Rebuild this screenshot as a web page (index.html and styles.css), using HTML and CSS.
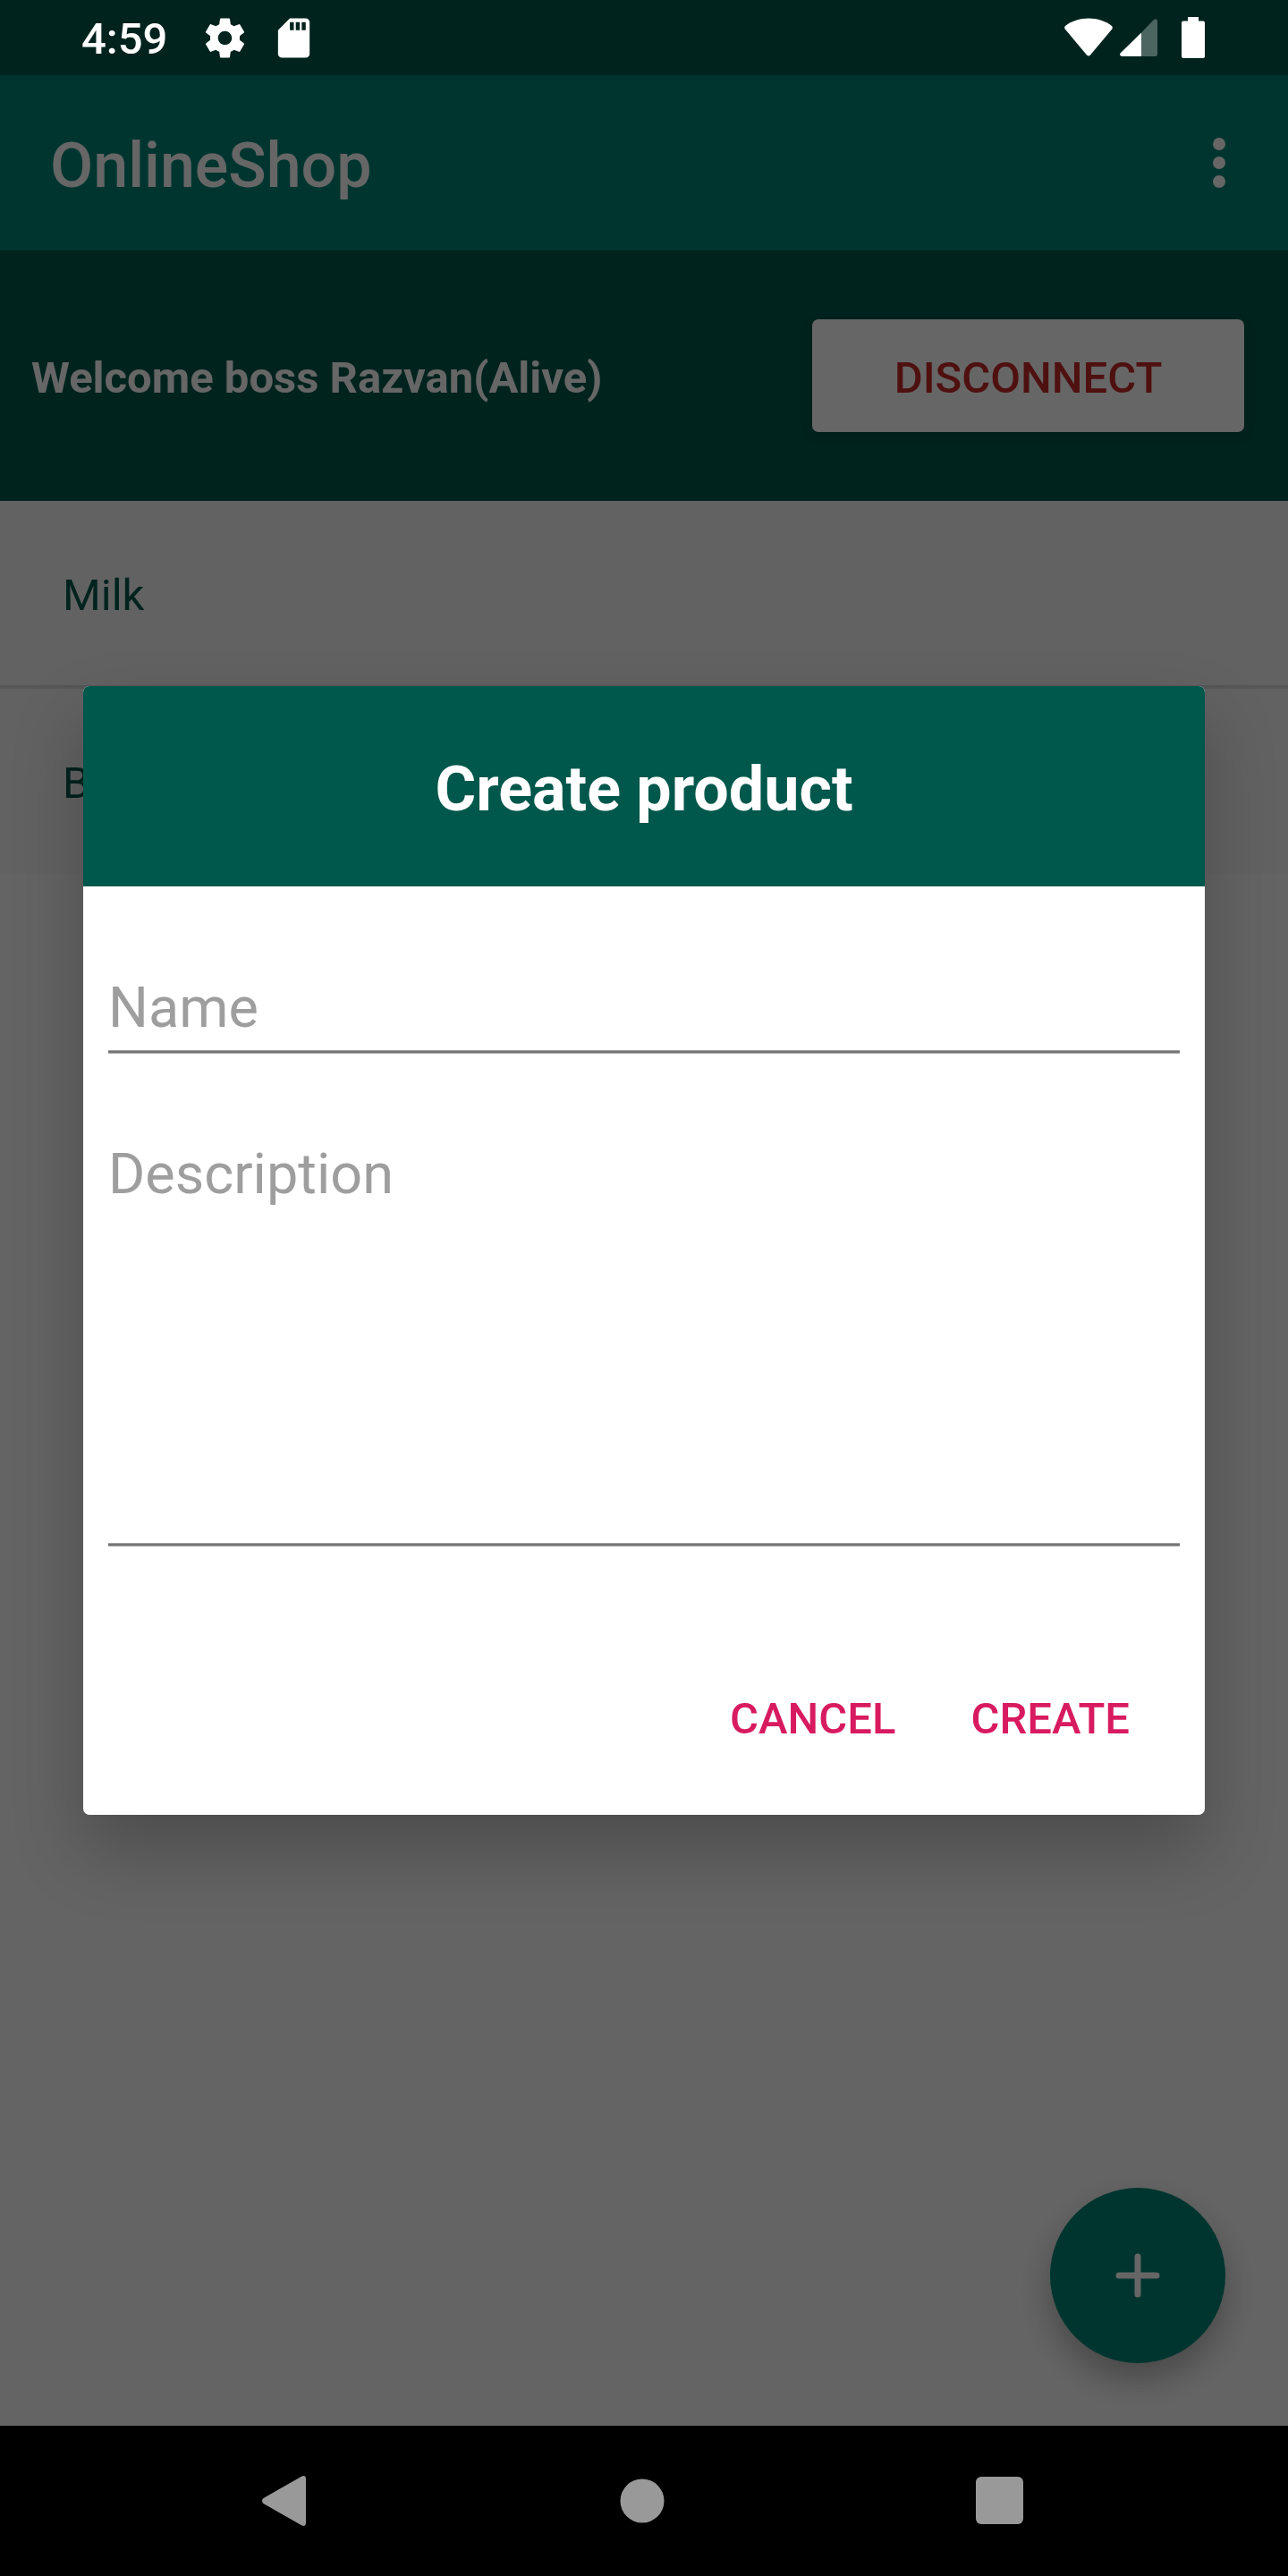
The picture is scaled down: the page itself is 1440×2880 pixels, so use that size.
FILE: index.html
```html
<!DOCTYPE html>
<html lang="en">
<head>
<meta charset="utf-8">
<meta name="viewport" content="width=device-width, initial-scale=1">
<title>OnlineShop</title>
<link rel="stylesheet" href="styles.css">
</head>
<body>
<div class="screen">
  <header class="status-bar">
    <span class="clock">4:59</span>
    <svg class="status-icon" viewBox="0 0 24 24" aria-hidden="true"><path d="M19.43 12.98c.04-.32.07-.64.07-.98s-.03-.66-.07-.98l2.11-1.65c.19-.15.24-.42.12-.64l-2-3.46c-.12-.22-.39-.3-.61-.22l-2.49 1c-.52-.4-1.08-.73-1.69-.98l-.38-2.65C14.46 2.18 14.25 2 14 2h-4c-.25 0-.46.18-.49.42l-.38 2.65c-.61.25-1.17.59-1.69.98l-2.49-1c-.23-.09-.49 0-.61.22l-2 3.46c-.13.22-.07.49.12.64l2.11 1.65c-.04.32-.07.65-.07.98s.03.66.07.98l-2.11 1.65c-.19.15-.24.42-.12.64l2 3.46c.12.22.39.3.61.22l2.49-1c.52.4 1.08.73 1.69.98l.38 2.65c.03.24.24.42.49.42h4c.25 0 .46-.18.49-.42l.38-2.65c.61-.25 1.17-.59 1.69-.98l2.49 1c.23.09.49 0 .61-.22l2-3.46c.12-.22.07-.49-.12-.64l-2.11-1.65zM12 15.5c-1.93 0-3.5-1.57-3.5-3.5s1.57-3.5 3.5-3.5 3.500 1.570 3.500 3.500-1.570 3.500-3.500 3.500z"/></svg>
    <svg class="status-icon" viewBox="0 0 24 24" aria-hidden="true"><path d="M18 2h-8L4.020 8 4 20c0 1.100.9 2 2 2h12c1.100 0 2-.9 2-2V4c0-1.100-.9-2-2-2zm-6 6h-2V4h2v4zm3 0h-2V4h2v4zm3 0h-2V4h2v4z"/></svg>
    <div class="signals">
      <svg class="wifi" viewBox="0 0 54 44" aria-hidden="true"><path d="M1 9C8 3.500 17 .5 27 .5S46 3.500 53 9q1.500 2 .3 3.500L29 41.500q-2 2-4 0L.7 12.500Q-.5 11 1 9z"/></svg>
      <svg class="cell" viewBox="0 0 42 42" aria-hidden="true"><path class="cell-off" d="M24 15.500L38 1q4-2 4 2v36.500q0 2.500-2.500 2.500H24z"/><path d="M24 15.500V42H2.500q-4-1-1.500-4z"/></svg>
      <svg class="battery" viewBox="0 0 26 46" aria-hidden="true"><path d="M7 0h12v4.500h5q2 0 2 2V44q0 2-2 2H2q-2 0-2-2V6.500q0-2 2-2h5z"/></svg>
    </div>
  </header>

  <main class="app">
    <div class="app-bar">
      <h1 class="app-title">OnlineShop</h1>
      <button class="menu-button" type="button" aria-label="More options">
        <svg viewBox="0 0 14 56" width="14" height="56"><circle cx="7" cy="7" r="7"/><circle cx="7" cy="28" r="7"/><circle cx="7" cy="49" r="7"/></svg>
      </button>
    </div>
    <div class="welcome">
      <p class="welcome-text">Welcome boss Razvan(Alive)</p>
      <button class="disconnect" type="button">DISCONNECT</button>
    </div>
    <ul class="products">
      <li class="product">Milk</li>
      <li class="product">Bread</li>
    </ul>
    <button class="fab" type="button" aria-label="Add product">
      <svg viewBox="0 0 50 50" width="50" height="50"><path d="M25 4v42M4 25h42"/></svg>
    </button>

    <div class="scrim">
      <form class="dialog" role="dialog" aria-labelledby="dialog-title">
        <h2 class="dialog-title" id="dialog-title">Create product</h2>
        <div class="dialog-fields">
          <input class="field" type="text" placeholder="Name" aria-label="Name">
          <textarea class="field field-tall" placeholder="Description" aria-label="Description"></textarea>
        </div>
        <div class="dialog-actions">
          <button class="action" type="button">CANCEL</button>
          <button class="action" type="button">CREATE</button>
        </div>
      </form>
    </div>
  </main>

  <nav class="nav-bar" aria-label="System">
    <button class="nav-button" type="button" aria-label="Back">
      <svg viewBox="0 0 56 56" width="56" height="56"><path d="M47 .8Q51.500-1.500 52 3v50q-.5 4.500-5 2.200L4.500 31Q1.500 28 4.500 25z"/></svg>
    </button>
    <button class="nav-button" type="button" aria-label="Home">
      <svg viewBox="0 0 56 56" width="56" height="56"><circle cx="28" cy="28" r="24.500"/></svg>
    </button>
    <button class="nav-button" type="button" aria-label="Recent apps">
      <svg viewBox="0 0 56 56" width="56" height="56"><rect x="1" y="1" width="53" height="53" rx="6"/></svg>
    </button>
  </nav>
</div>
</body>
</html>
```
FILE: styles.css
```css
* {
  box-sizing: border-box;
}

body {
  margin: 0;
  font-family: Roboto, "Liberation Sans", sans-serif;
  font-size: 49px;
  line-height: 58px;
}

h1,
h2,
p,
ul {
  margin: 0;
  padding: 0;
}

button,
input,
textarea {
  font: inherit;
  border: 0;
  margin: 0;
}

svg {
  display: block;
}

.screen {
  display: flex;
  flex-direction: column;
  min-height: 100vh;
}

/* System status bar */
.status-bar {
  display: flex;
  align-items: center;
  height: 84px;
  padding: 0 93px 0 91px;
  background: #00231e;
  color: #fff;
  fill: #fff;
}

.clock {
  margin-right: 38px;
  padding-top: 4px;
  font-weight: 500;
}

.status-icon {
  width: 53px;
  height: 53px;
  margin-right: 24px;
}

.signals {
  display: flex;
  align-items: center;
  margin-left: auto;
}

.wifi {
  width: 54px;
  height: 44px;
  margin-right: 8px;
}

.cell {
  width: 42px;
  height: 42px;
  margin-right: 27px;
}

.cell-off {
  opacity: 0.3;
}

.battery {
  width: 26px;
  height: 46px;
}

/* App content */
.app {
  position: relative;
  display: flex;
  flex: 1;
  flex-direction: column;
  overflow: hidden;
  background: #fafafa;
}

.app-bar {
  display: flex;
  align-items: center;
  justify-content: space-between;
  height: 196px;
  padding: 0 56px;
  background: #008577;
  color: #fff;
}

.app-title {
  padding-top: 6px;
  font-size: 70px;
  font-weight: 500;
  line-height: 82px;
}

.menu-button {
  padding: 14px;
  background: none;
  fill: #fff;
}

.welcome {
  display: flex;
  align-items: center;
  justify-content: space-between;
  height: 280px;
  padding: 0 49px 0 35px;
  background: #00574b;
  color: #fff;
}

.welcome-text {
  padding-top: 6px;
  font-weight: 700;
}

.disconnect {
  width: 483px;
  height: 126px;
  padding: 6px 0 0;
  border-radius: 7px;
  background: #fff;
  box-shadow: 0 4px 14px rgba(0, 0, 0, 0.12);
  color: #c62828;
  font-weight: 500;
}

.products {
  list-style: none;
}

.product {
  display: flex;
  align-items: center;
  height: 206px;
  padding: 6px 70px 0;
  background: #f5f5f5;
  color: #00574b;
}

.product + .product {
  height: 210px;
  border-top: 4px solid #dadada;
}

.fab {
  position: absolute;
  right: 70px;
  bottom: 70px;
  display: grid;
  place-items: center;
  width: 196px;
  height: 196px;
  padding: 0;
  border-radius: 50%;
  background: #008577;
  box-shadow: 0 18px 36px rgba(0, 0, 0, 0.28);
  fill: none;
  stroke: #fff;
  stroke-width: 7px;
  stroke-linecap: round;
}

/* Modal dialog */
.scrim {
  position: absolute;
  inset: 0;
  display: grid;
  align-items: center;
  padding: 0 93px;
  background: rgba(0, 0, 0, 0.6);
}

.dialog {
  overflow: hidden;
  border-radius: 7px;
  background: #fff;
  box-shadow: 0 40px 80px rgba(0, 0, 0, 0.24);
}

.dialog-title {
  padding: 74px 28px 68px;
  background: #00574b;
  color: #fff;
  font-size: 70px;
  font-weight: 700;
  line-height: 82px;
  text-align: center;
}

.dialog-fields {
  display: flex;
  flex-direction: column;
  gap: 84px;
  padding: 84px 28px 0;
}

.field {
  display: block;
  width: 100%;
  height: 103px;
  padding: 14px 0 15px;
  outline: 0;
  border-radius: 0;
  background: linear-gradient(#a0a0a0 1px, #757575 1px 3px, #a0a0a0 3px) bottom / 100% 4px no-repeat;
  color: #212121;
  font-size: 63px;
  line-height: 74px;
  resize: none;
}

.field-tall {
  height: 467px;
}

.field::placeholder {
  color: #9e9e9e;
  opacity: 1;
}

.dialog-actions {
  display: flex;
  justify-content: flex-end;
  gap: 28px;
  padding: 128px 56px 46px;
}

.action {
  height: 126px;
  padding: 4px 28px 0;
  background: none;
  color: #d81b60;
  font-weight: 500;
}

/* System navigation bar */
.nav-bar {
  display: grid;
  grid-template-columns: repeat(3, 1fr);
  height: 168px;
  padding: 0 122px 0 118px;
  background: #000;
}

.nav-button {
  display: grid;
  place-items: center;
  padding: 0;
  background: none;
  fill: #999;
}
```
